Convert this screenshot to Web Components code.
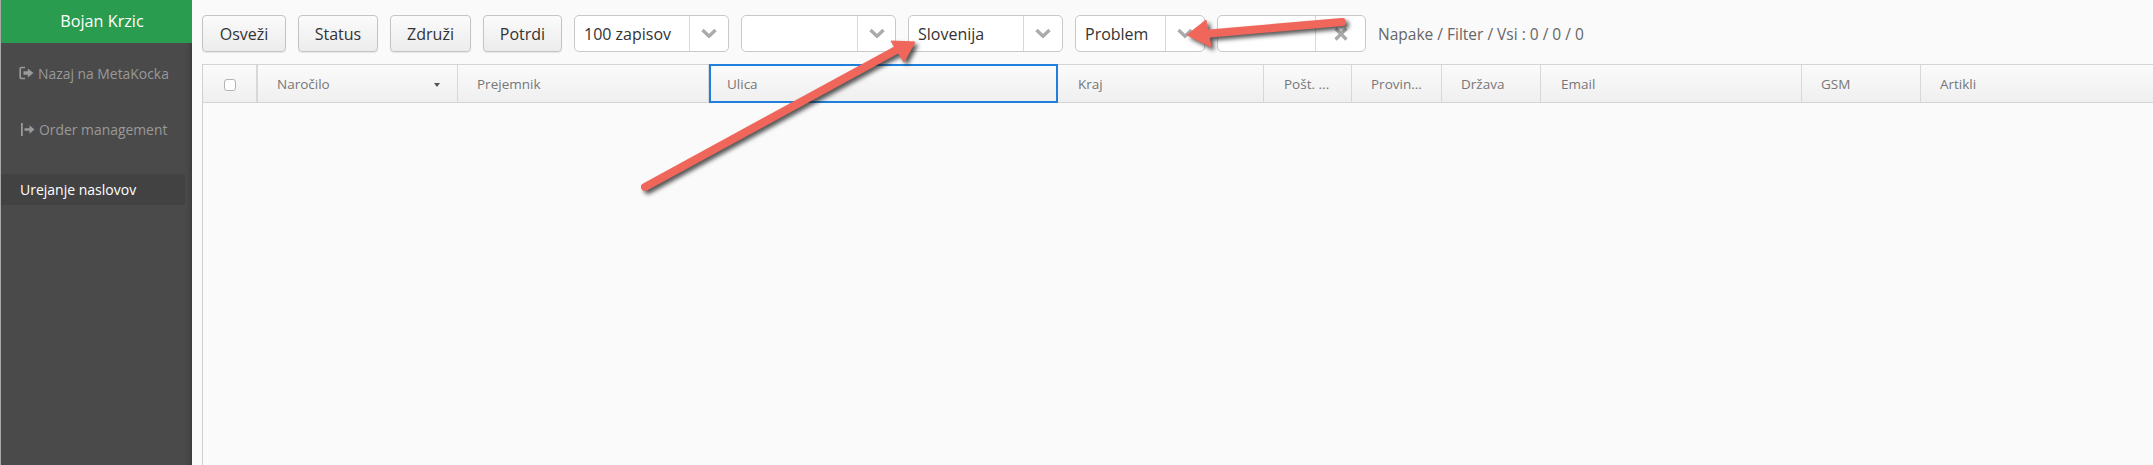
<!DOCTYPE html>
<html>
<head>
<meta charset="utf-8">
<title>Urejanje naslovov</title>
<style>
  html, body { margin: 0; height: 100%; }
  body { background: #fafafa; font-family: "Open Sans", "Liberation Sans", sans-serif; overflow: hidden; }
</style>
</head>
<body>
<address-app></address-app>

<script>
class AddressApp extends HTMLElement {
  constructor() {
    super();
    this.root = this.attachShadow({ mode: 'open' });
  }
  connectedCallback() {
    this.root.innerHTML = `
      <style>
        :host { display: flex; height: 465px; position: relative; overflow: hidden; }
        main { flex: 1; min-width: 0; display: flex; flex-direction: column; padding: 15px 0 0 10px; gap: 12px; }
        .bar { display: flex; align-items: center; height: 37px; }
        .bar > * { margin-right: 12px; }
        .stat { font-size: 15.500px; color: #666; white-space: nowrap; }
        .arrows { position: absolute; left: 0; top: 0; pointer-events: none; filter: drop-shadow(3px 3px 2px rgba(30,30,30,.75)); }
      </style>
      <side-nav>
        <nav-item icon="out">Nazaj na MetaKocka</nav-item>
        <nav-item icon="bar">Order management</nav-item>
        <nav-item active>Urejanje naslovov</nav-item>
      </side-nav>
      <main>
        <div class="bar">
          <tool-button w="84">Osveži</tool-button>
          <tool-button w="80">Status</tool-button>
          <tool-button w="81">Združi</tool-button>
          <tool-button w="79">Potrdi</tool-button>
          <combo-box w="155" btn="39">100 zapisov</combo-box>
          <combo-box w="155" btn="38"></combo-box>
          <combo-box w="155" btn="39">Slovenija</combo-box>
          <combo-box w="130" btn="39">Problem</combo-box>
          <combo-box w="149" btn="50" clear></combo-box>
          <span class="stat">Napake / Filter / Vsi : 0 / 0 / 0</span>
        </div>
        <data-grid>
          <grid-col w="55" check></grid-col>
          <grid-col w="200" pad="19" sort>Naročilo</grid-col>
          <grid-col w="251" pad="19">Prejemnik</grid-col>
          <grid-col w="349" pad="18" focus>Ulica</grid-col>
          <grid-col w="206" pad="20">Kraj</grid-col>
          <grid-col w="88" pad="20">Pošt. ...</grid-col>
          <grid-col w="90" pad="19">Provin...</grid-col>
          <grid-col w="99" pad="19">Država</grid-col>
          <grid-col w="261" pad="20">Email</grid-col>
          <grid-col w="119" pad="19">GSM</grid-col>
          <grid-col w="232" pad="19" last>Artikli</grid-col>
        </data-grid>
      </main>
      <svg class="arrows" width="2153" height="465" viewBox="0 0 2153 465">
        <g fill="#f0665a" stroke="#f0665a" stroke-linejoin="round">
          <path d="M645 187 L898 49" stroke-width="8" stroke-linecap="round" fill="none"/>
          <path d="M915 42 L891 41 L904 62 Z" stroke-width="1"/>
          <path d="M1342 22 L1204 34" stroke-width="8" stroke-linecap="round" fill="none"/>
          <path d="M1187 35 L1206 20 L1211 47 Z" stroke-width="1"/>
        </g>
      </svg>
    `;
  }
}

class SideNav extends HTMLElement {
  constructor() {
    super();
    this.root = this.attachShadow({ mode: 'open' });
  }
  connectedCallback() {
    this.root.innerHTML = `
      <style>
        :host { display: flex; flex-direction: column; width: 191px; flex: none; background: #4a4a4a; border-left: 1px solid #a8a8a8;
          box-shadow: inset -6px 0 6px -6px rgba(0,0,0,.35); }
        header { height: 43px; background: #2a9c50; color: #fff; font-size: 16.200px; display: flex; align-items: center; justify-content: center; padding-left: 11px; padding-bottom: 1px; box-sizing: border-box; }
        .items { display: flex; flex-direction: column; padding-top: 19px; }
      </style>
      <header>Bojan Krzic</header>
      <div class="items"><slot></slot></div>
    `;
  }
}

class NavItem extends HTMLElement {
  constructor() {
    super();
    this.root = this.attachShadow({ mode: 'open' });
  }
  connectedCallback() {
    const icons = {
      out: '<svg width="15" height="14" viewBox="0 0 15 14"><path d="M6 1.500H2.500A1.200 1.200 0 0 0 1.200 2.700v8.600a1.200 1.200 0 0 0 1.300 1.200H6" fill="none" stroke="#999" stroke-width="1.700"/><path d="M4.500 5.300H8.800V2.600L14.500 7L8.800 11.400V8.700H4.500Z" fill="#999"/></svg>',
      bar: '<svg width="15" height="15" viewBox="0 0 15 15"><path d="M1 1h1.800v13H1z" fill="#999"/><path d="M4.500 6.300h5V3.200L14.500 7.500L9.500 11.800V8.700h-5z" fill="#999"/></svg>'
    };
    const name = this.getAttribute('icon');
    this.root.innerHTML = `
      <style>
        :host { display: flex; align-items: center; gap: 4px; font-size: 13.900px; color: #999; white-space: nowrap; height: 22px; padding-left: 18px; margin-bottom: 34px; }
        :host([icon="bar"]) { padding-left: 19px; }
        :host([active]) { color: #fff; background: #424242; height: 31px; padding-left: 19px; width: 165px; font-size: 14px; margin-bottom: 0; }
        svg { display: block; }
      </style>
      ${name ? icons[name] : ''}<span><slot></slot></span>
    `;
  }
}

class ToolButton extends HTMLElement {
  constructor() {
    super();
    this.root = this.attachShadow({ mode: 'open' });
  }
  connectedCallback() {
    const w = this.getAttribute('w');
    this.root.innerHTML = `
      <style>
        :host { display: flex; align-items: center; justify-content: center; box-sizing: border-box; width: ${w}px; height: 37px; flex: none;
          border: 1px solid #c4c4c4; border-radius: 4px; background: linear-gradient(#fbfbfb, #ececec); color: #333; font-size: 16px;
          box-shadow: 0 1px 1px rgba(0,0,0,.08); }
      </style>
      <slot></slot>
    `;
  }
}

class ComboBox extends HTMLElement {
  constructor() {
    super();
    this.root = this.attachShadow({ mode: 'open' });
  }
  connectedCallback() {
    const w = this.getAttribute('w');
    const btn = this.getAttribute('btn');
    const icon = this.hasAttribute('clear')
      ? '<svg width="14" height="14" viewBox="0 0 14 14"><path d="M1.500 1.500L12.500 12.500M12.500 1.500L1.500 12.500" stroke="#aaa" stroke-width="3.200" fill="none"/></svg>'
      : '<svg width="16" height="11" viewBox="0 0 16 11"><path d="M1.500 2L8 8.200L14.500 2" stroke="#aaa" stroke-width="3.400" fill="none"/></svg>';
    this.root.innerHTML = `
      <style>
        :host { display: flex; box-sizing: border-box; width: ${w}px; height: 37px; flex: none; border: 1px solid #c8c8c8; border-radius: 5px; background: #fff; color: #333; font-size: 16px; }
        .val { flex: 1; display: flex; align-items: center; padding-left: 9px; white-space: nowrap; }
        .btn { width: ${btn}px; flex: none; box-sizing: border-box; border-left: 1px solid #d8d8d8; display: flex; align-items: center; justify-content: center; }
      </style>
      <div class="val"><slot></slot></div>
      <div class="btn">${icon}</div>
    `;
  }
}

class DataGrid extends HTMLElement {
  constructor() {
    super();
    this.root = this.attachShadow({ mode: 'open' });
  }
  connectedCallback() {
    this.root.innerHTML = `
      <style>
        :host { display: flex; flex-direction: column; flex: 1; border-left: 1px solid #d0d0d0; }
        .head { display: flex; height: 39px; box-sizing: border-box; border-top: 1px solid #d4d4d4; border-bottom: 1px solid #d4d4d4; background: linear-gradient(#fbfbfb, #efefef); }
      </style>
      <div class="head"><slot></slot></div>
    `;
  }
}

class GridCol extends HTMLElement {
  constructor() {
    super();
    this.root = this.attachShadow({ mode: 'open' });
  }
  connectedCallback() {
    const w = this.getAttribute('w');
    const pad = this.getAttribute('pad') || 0;
    const check = this.hasAttribute('check');
    const sort = this.hasAttribute('sort');
    this.root.innerHTML = `
      <style>
        :host { display: flex; align-items: center; box-sizing: border-box; width: ${w}px; flex: none; padding-left: ${pad}px; position: relative; border-right: 1px solid #d8d8d8; color: #777; font-size: 13.500px; white-space: nowrap; }
        :host([last]) { border-right: 0; }
        :host([check]) { justify-content: center; padding-left: 0; border-right-width: 2px; }
        :host([focus]) { outline: 2px solid #1f7fdb; outline-offset: -2px; border-right: 0; margin: -1px 0; height: 39px; }
        .box { width: 10px; height: 10px; border: 1px solid #b4b4b4; border-radius: 3px; background: #fff; margin-top: 3px; }
        .caret { position: absolute; right: 17px; top: 18px; width: 0; height: 0; border: 3.500px solid transparent; border-top: 4px solid #555; border-bottom: 0; }
      </style>
      ${check ? '<span class="box"></span>' : '<slot></slot>'}
      ${sort ? '<span class="caret"></span>' : ''}
    `;
  }
}

customElements.define('address-app', AddressApp);
customElements.define('side-nav', SideNav);
customElements.define('nav-item', NavItem);
customElements.define('tool-button', ToolButton);
customElements.define('combo-box', ComboBox);
customElements.define('data-grid', DataGrid);
customElements.define('grid-col', GridCol);
</script>
</body>
</html>
